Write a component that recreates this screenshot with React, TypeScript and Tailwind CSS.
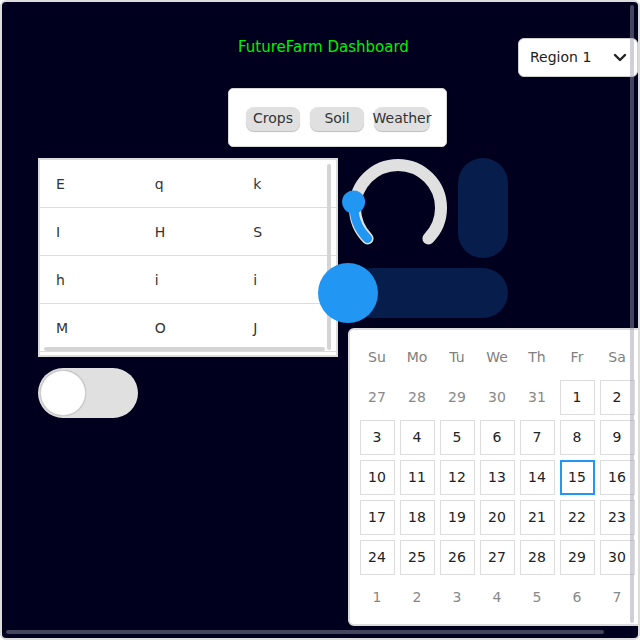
import React from "react";

const rows = [
  ["E", "q", "k"],
  ["I", "H", "S"],
  ["h", "i", "i"],
  ["M", "O", "J"],
];

const weekDays = ["Su", "Mo", "Tu", "We", "Th", "Fr", "Sa"];

type Day = { n: number; muted: boolean };

function buildDays(): Day[] {
  const days: Day[] = [];
  [27, 28, 29, 30, 31].forEach((n) => days.push({ n, muted: true }));
  for (let n = 1; n <= 30; n++) days.push({ n, muted: false });
  for (let n = 1; n <= 7; n++) days.push({ n, muted: true });
  return days;
}

function Gauge() {
  // 270deg arc, opening at the bottom; value around 20%
  return (
    <svg width="100" height="100" viewBox="0 0 100 100" className="overflow-visible">
      <path
        d="M 19.6 80.4 A 43 43 0 1 1 80.4 80.4"
        fill="none"
        stroke="#e0e0e0"
        strokeWidth="12"
        strokeLinecap="round"
      />
      <path
        d="M 19.6 80.4 A 43 43 0 0 1 6.4 44"
        fill="none"
        stroke="#2196f3"
        strokeWidth="9"
        strokeLinecap="round"
      />
      <circle cx="5.6" cy="44" r="11.5" fill="#2196f3" />
    </svg>
  );
}

export default function App() {
  const days = buildDays();
  const font = { fontFamily: '"DejaVu Sans", sans-serif' };

  return (
    <div
      className="relative h-[640px] w-[640px] overflow-hidden rounded-[6px] border-2 border-[#dcdcdc] bg-[#00001e]"
      style={font}
    >
      {/* header */}
      <div className="flex items-start pl-[236px] pt-[36px]">
        <h1 className="text-[15px] leading-[18px] text-[#00f000]">FutureFarm Dashboard</h1>
        <div className="ml-auto flex h-[39px] w-[120px] items-center justify-between rounded-[6px] border border-[#cfcfcf] bg-white pl-[11px] pr-[10px] text-[14px] text-[#222]">
          <span>Region 1</span>
          <svg width="14" height="10" viewBox="0 0 14 10">
            <polyline points="2,2 7,7 12,2" fill="none" stroke="#222" strokeWidth="2.4" strokeLinecap="round" strokeLinejoin="round" />
          </svg>
        </div>
      </div>

      {/* tabs */}
      <div className="ml-[226px] mt-[11px] flex h-[59px] w-[219px] items-center gap-[10px] rounded-[5px] border border-[#d6d6d6] bg-white pl-[17px] pt-[2px]">
        {["Crops", "Soil", "Weather"].map((t) => (
          <div
            key={t}
            className={`flex h-[24px] ${t === "Weather" ? "w-[56px]" : "w-[54px]"} items-center justify-center whitespace-nowrap rounded-[8px] bg-[#e0e0e0] text-[14px] text-[#333] shadow-[0_1px_1px_#bdbdbd]`}
          >
            {t}
          </div>
        ))}
      </div>

      {/* main area */}
      <div className="mt-[11px] flex pl-[36px]">
        <div className="flex w-[300px] shrink-0 flex-col">
          <div className="relative h-[199px] w-[300px] overflow-hidden border-2 border-[#dcdcdc] bg-white text-[14px] text-[#333]">
            {rows.map((r, i) => (
              <div key={i} className="flex h-[48px] items-center border-b border-[#dcdcdc] pt-[1px]">
                {r.map((c, j) => (
                  <div key={j} className="w-[100px] pl-[16px]">
                    {c}
                  </div>
                ))}
              </div>
            ))}
            <div className="absolute right-[5px] top-[4px] h-[186px] w-[4px] rounded-full bg-[#d4d4d4]" />
            <div className="absolute bottom-[4px] left-[4px] h-[4px] w-[281px] rounded-full bg-[#d4d4d4]" />
          </div>
          <div className="relative mt-[11px] h-[50px] w-[100px] rounded-full bg-[#e0e0e0]">
            <div className="absolute left-[2px] top-[2px] h-[46px] w-[46px] rounded-full border border-[#d0d0d0] bg-white shadow-[0_0_1px_#999]" />
          </div>
        </div>

        <div className="ml-[10px] flex w-[302px] shrink-0 flex-col">
          <div className="flex gap-[10px]">
            <Gauge />
            <div className="h-[100px] w-[50px] rounded-full bg-[#071d4b]" />
          </div>
          <div className="relative mt-[10px] h-[50px] w-[160px] rounded-full bg-[#071d4b]">
            <div className="absolute left-[-30px] top-[-5px] h-[60px] w-[60px] rounded-full bg-[#2196f3]" />
          </div>
          <div className="mt-[10px] w-[302px] rounded-[6px] border-2 border-[#dcdcdc] bg-white p-[7px]">
            <div className="grid grid-cols-[repeat(7,40px)]">
              {weekDays.map((d) => (
                <div key={d} className="flex h-[40px] items-center justify-center text-[14px] text-[#808080]">
                  {d}
                </div>
              ))}
              {days.map((d, i) => (
                <div key={i} className="flex h-[40px] items-center justify-center">
                  {d.muted ? (
                    <span className="text-[14px] text-[#888]">{d.n}</span>
                  ) : (
                    <div
                      className={`flex h-[35px] w-[35px] items-center justify-center text-[14px] text-[#222] ${
                        d.n === 15 ? "border-2 border-[#2196f3]" : "border border-[#dcdcdc]"
                      }`}
                    >
                      {d.n}
                    </div>
                  )}
                </div>
              ))}
            </div>
          </div>
        </div>
      </div>

      {/* page scrollbars */}
      <div className="absolute bottom-[4px] left-[4px] h-[4px] w-[598px] rounded-full bg-[rgba(150,150,170,0.45)]" />
      <div className="absolute right-[4px] top-[3px] h-[618px] w-[4px] rounded-full bg-[rgba(150,150,170,0.45)]" />
    </div>
  );
}
